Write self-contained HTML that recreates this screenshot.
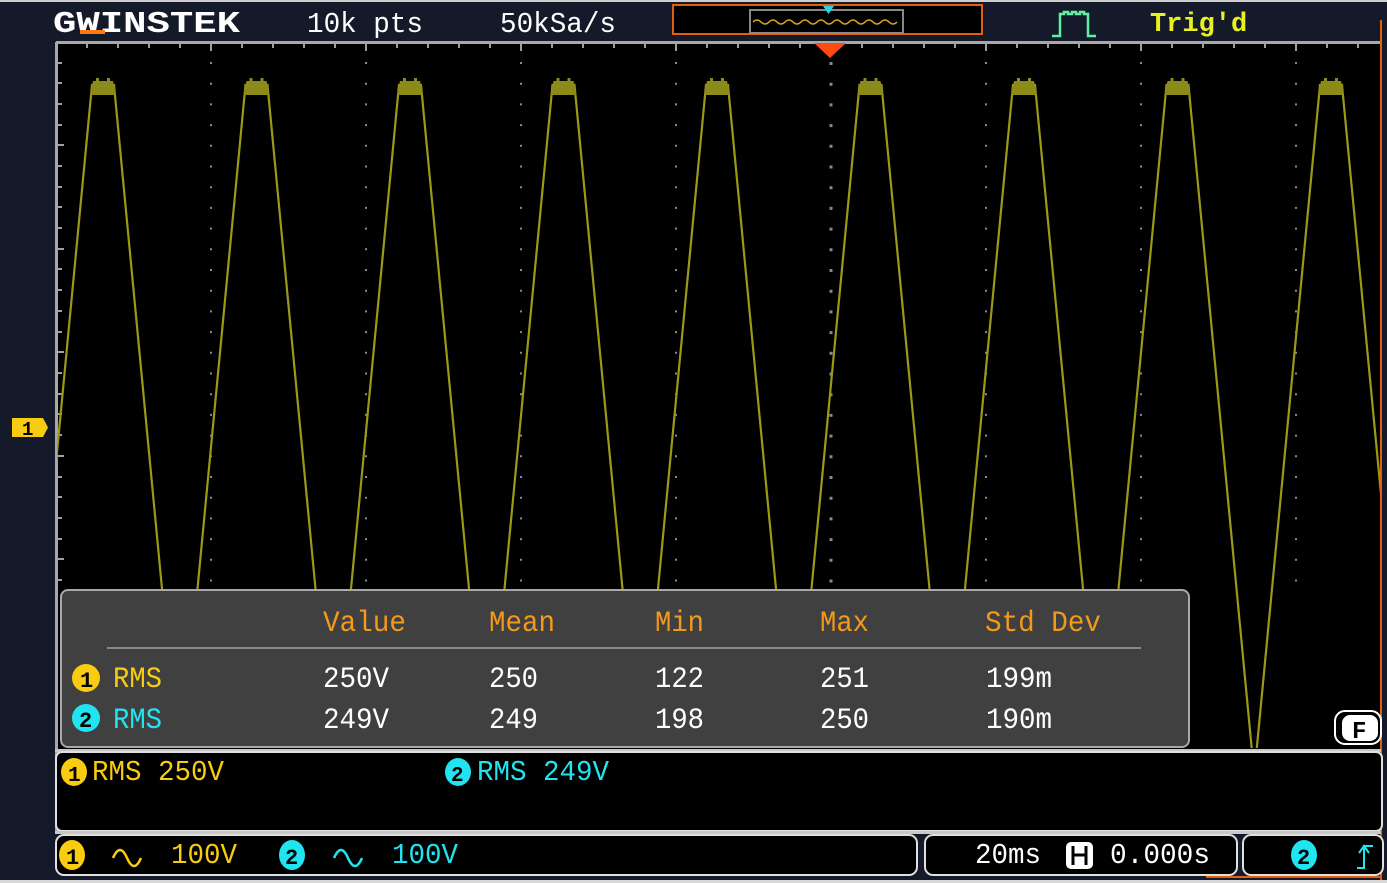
<!DOCTYPE html>
<html><head><meta charset="utf-8"><style>
html,body{margin:0;padding:0;background:#141a2a;}
svg{display:block}
text{font-family:"Liberation Mono",monospace;}
</style></head><body>
<svg width="1387" height="883" viewBox="0 0 1387 883" xmlns="http://www.w3.org/2000/svg">
<defs>
<pattern id="hdots" x="56" y="0" width="31" height="883" patternUnits="userSpaceOnUse"><rect x="0" y="0" width="2" height="2" fill="#9a9a9a"/></pattern>
<clipPath id="grid"><rect x="57" y="43" width="1323" height="705"/></clipPath>
</defs>
<rect width="1387" height="883" fill="#141a2a"/>
<rect x="0" y="0" width="1387" height="2" fill="#cfcfcf"/>
<rect x="0" y="880" width="1387" height="3" fill="#d8d8d8"/>
<rect x="56" y="42" width="1325" height="790" fill="#000"/>
<rect x="56" y="41" width="1325" height="3" fill="#a8a8a8"/>
<rect x="55" y="42" width="3" height="790" fill="#a8a8a8"/>
<path d="M87 44v4M118 44v4M149 44v4M180 44v4M211 44v7M242 44v4M273 44v4M304 44v4M335 44v4M366 44v7M397 44v4M428 44v4M459 44v4M490 44v4M521 44v7M552 44v4M583 44v4M614 44v4M645 44v4M676 44v7M707 44v4M738 44v4M769 44v4M800 44v4M831 44v7M862 44v4M893 44v4M924 44v4M955 44v4M986 44v7M1017 44v4M1048 44v4M1079 44v4M1110 44v4M1141 44v7M1172 44v4M1203 44v4M1234 44v4M1265 44v4M1296 44v7M1327 44v4M1358 44v4" stroke="#a0a0a0" stroke-width="2"/>
<path d="M58 63h4M58 83h4M58 104h4M58 125h4M58 145h6M58 166h4M58 187h4M58 207h4M58 228h4M58 249h6M58 269h4M58 290h4M58 311h4M58 332h4M58 352h6M58 373h4M58 394h4M58 414h4M58 435h4M58 456h6M58 477h4M58 497h4M58 518h4M58 539h4M58 559h6M58 580h4" stroke="#a0a0a0" stroke-width="2"/>
<rect x="56" y="144" width="1325" height="2" fill="url(#hdots)"/>
<rect x="56" y="248" width="1325" height="2" fill="url(#hdots)"/>
<rect x="56" y="351" width="1325" height="2" fill="url(#hdots)"/>
<rect x="56" y="455" width="1325" height="3" fill="url(#hdots)"/>
<rect x="56" y="558" width="1325" height="2" fill="url(#hdots)"/>
<g stroke="#8a8a8a" stroke-width="2" stroke-dasharray="2 18.7">
<path d="M211 62V590M366 62V590M521 62V590M676 62V590M986 62V590M1141 62V590M1296 62V590"/>
<path d="M831 62V590" stroke-dasharray="3 17.7" stroke-width="3"/>
</g>
<g clip-path="url(#grid)">
<polyline fill="none" stroke="#9c9818" stroke-width="2.2" points="-61.5,85 -39.5,85 26.25,775 92,85 114,85 179.75,775 245.5,85 267.5,85 333.25,775 399,85 421,85 486.75,775 552.5,85 574.5,85 640.25,775 706,85 728,85 793.75,775 859.5,85 881.5,85 947.25,775 1013,85 1035,85 1100.75,775 1166.5,85 1188.5,85 1254.25,775 1320,85 1342,85 1407.75,775"/>
<g fill="#8c8a18">
<path id="pk" d="M90 95l3 -14h3v-3h3v3h8v-3h3v3h3l3 14z"/>
<use href="#pk" x="153.5"/><use href="#pk" x="307"/><use href="#pk" x="460.5"/><use href="#pk" x="614"/><use href="#pk" x="767.5"/><use href="#pk" x="921"/><use href="#pk" x="1074.5"/><use href="#pk" x="1228"/>
</g>
</g>
<rect x="0" y="2" width="1387" height="38" fill="#141a2a"/>
<text x="53" y="32" font-family="Liberation Sans" font-weight="bold" font-size="31" fill="#fff" textLength="187" lengthAdjust="spacingAndGlyphs">GWINSTEK</text>
<rect x="80" y="30" width="25" height="4" fill="#ff7a10"/>
<text x="307" y="32" font-size="29" fill="#fff" textLength="116" lengthAdjust="spacingAndGlyphs">10k pts</text>
<text x="500" y="32" font-size="29" fill="#fff" textLength="116" lengthAdjust="spacingAndGlyphs">50kSa/s</text>
<rect x="673" y="5" width="309" height="29" fill="#000" stroke="#e06010" stroke-width="2"/>
<rect x="750" y="10" width="153" height="23" fill="none" stroke="#888" stroke-width="2"/>
<path d="M753 22q4 -4 8 0t8 0t8 0t8 0t8 0t8 0t8 0t8 0t8 0t8 0t8 0t8 0t8 0t8 0t8 0t8 0t8 0t8 0" fill="none" stroke="#d8a818" stroke-width="1.5"/>
<path d="M823 6h11l-5.5 8z" fill="#20d8e8"/>
<path d="M1052 36h8v-22h4v-2h4v2h4v-2h4v2h4v-2h4v2h4v22h8" fill="none" stroke="#60f0a0" stroke-width="2.5"/>
<text x="1150" y="31" font-family="Liberation Sans" font-weight="bold" font-size="27" fill="#e8f020">Trig'd</text>
<rect x="1380" y="20" width="2" height="860" fill="#e06010"/>
<path d="M814 43h32l-16 15z" fill="#ff4a14"/>
<path d="M12 418h31l5 9.5l-5 9.5h-31z" fill="#f8cc10"/>
<text x="22" y="435" font-family="Liberation Sans" font-weight="bold" font-size="19" fill="#000">1</text>
<rect x="61" y="590" width="1128" height="157" rx="7" fill="#404040" stroke="#a8a8a8" stroke-width="2"/>
<rect x="107" y="647" width="1034" height="2" fill="#8a8a8a"/>
<g font-size="30" fill="#f39a1a">
<text x="323" y="631" textLength="83" lengthAdjust="spacingAndGlyphs">Value</text>
<text x="489" y="631" textLength="66" lengthAdjust="spacingAndGlyphs">Mean</text>
<text x="655" y="631" textLength="49" lengthAdjust="spacingAndGlyphs">Min</text>
<text x="820" y="631" textLength="49" lengthAdjust="spacingAndGlyphs">Max</text>
<text x="985" y="631" textLength="116" lengthAdjust="spacingAndGlyphs">Std Dev</text>
</g>
<ellipse cx="86" cy="678" rx="14" ry="14" fill="#f8cc10"/>
<text x="80" y="687" font-family="Liberation Sans" font-weight="bold" font-size="22" fill="#000">1</text>
<ellipse cx="86" cy="718" rx="14" ry="14" fill="#20e4f0"/>
<text x="79" y="727" font-family="Liberation Sans" font-weight="bold" font-size="22" fill="#000">2</text>
<g font-size="30">
<text x="113" y="687" fill="#f8cc10" textLength="49" lengthAdjust="spacingAndGlyphs">RMS</text>
<text x="113" y="728" fill="#20e4f0" textLength="49" lengthAdjust="spacingAndGlyphs">RMS</text>
<g fill="#fff">
<text x="323" y="687" textLength="66" lengthAdjust="spacingAndGlyphs">250V</text>
<text x="489" y="687" textLength="49" lengthAdjust="spacingAndGlyphs">250</text>
<text x="655" y="687" textLength="49" lengthAdjust="spacingAndGlyphs">122</text>
<text x="820" y="687" textLength="49" lengthAdjust="spacingAndGlyphs">251</text>
<text x="986" y="687" textLength="66" lengthAdjust="spacingAndGlyphs">199m</text>
<text x="323" y="728" textLength="66" lengthAdjust="spacingAndGlyphs">249V</text>
<text x="489" y="728" textLength="49" lengthAdjust="spacingAndGlyphs">249</text>
<text x="655" y="728" textLength="49" lengthAdjust="spacingAndGlyphs">198</text>
<text x="820" y="728" textLength="49" lengthAdjust="spacingAndGlyphs">250</text>
<text x="986" y="728" textLength="66" lengthAdjust="spacingAndGlyphs">190m</text>
</g></g>
<rect x="1335" y="711" width="46" height="33" rx="10" fill="#000" stroke="#fff" stroke-width="2"/>
<rect x="1342" y="715" width="36" height="26" rx="8" fill="#fff"/>
<text x="1352" y="738" font-family="Liberation Sans" font-weight="bold" font-size="24" fill="#000">F</text>
<rect x="55" y="749" width="1326" height="3" fill="#c8c8c8"/>
<rect x="56" y="752" width="1326" height="79" rx="6" fill="#000" stroke="#e0e0e0" stroke-width="2"/>
<ellipse cx="74" cy="772" rx="13" ry="14" fill="#f8cc10"/>
<text x="68" y="781" font-family="Liberation Sans" font-weight="bold" font-size="21" fill="#000">1</text>
<text x="92" y="780" font-size="29" fill="#f8cc10" textLength="132" lengthAdjust="spacingAndGlyphs">RMS 250V</text>
<ellipse cx="458" cy="772" rx="13" ry="14" fill="#20e4f0"/>
<text x="451" y="781" font-family="Liberation Sans" font-weight="bold" font-size="21" fill="#000">2</text>
<text x="477" y="780" font-size="29" fill="#20e4f0" textLength="132" lengthAdjust="spacingAndGlyphs">RMS 249V</text>
<rect x="55" y="831" width="1326" height="3" fill="#c8c8c8"/>
<rect x="56" y="835" width="861" height="40" rx="8" fill="#000" stroke="#e0e0e0" stroke-width="2"/>
<rect x="925" y="835" width="312" height="40" rx="8" fill="#000" stroke="#e0e0e0" stroke-width="2"/>
<rect x="1243" y="835" width="140" height="40" rx="8" fill="#000" stroke="#e0e0e0" stroke-width="2"/>
<rect x="1206" y="876" width="176" height="2" fill="#e06010"/>
<ellipse cx="72" cy="855" rx="13" ry="15" fill="#f8cc10"/>
<text x="66" y="864" font-family="Liberation Sans" font-weight="bold" font-size="22" fill="#000">1</text>
<path d="M113 858q7 -16 14 0t14 0" fill="none" stroke="#f8cc10" stroke-width="2.5"/>
<text x="171" y="863" font-size="29" fill="#f8cc10" textLength="66" lengthAdjust="spacingAndGlyphs">100V</text>
<ellipse cx="292" cy="855" rx="13" ry="15" fill="#20e4f0"/>
<text x="285" y="864" font-family="Liberation Sans" font-weight="bold" font-size="22" fill="#000">2</text>
<path d="M334 858q7 -16 14 0t14 0" fill="none" stroke="#20e4f0" stroke-width="2.5"/>
<text x="392" y="863" font-size="29" fill="#20e4f0" textLength="66" lengthAdjust="spacingAndGlyphs">100V</text>
<text x="975" y="863" font-size="29" fill="#fff" textLength="66" lengthAdjust="spacingAndGlyphs">20ms</text>
<rect x="1066" y="842" width="27" height="27" rx="5" fill="#fff"/>
<path d="M1073 846v19M1086 846v19M1073 855h13" stroke="#000" stroke-width="3"/>
<text x="1110" y="863" font-size="29" fill="#fff" textLength="100" lengthAdjust="spacingAndGlyphs">0.000s</text>
<ellipse cx="1304" cy="855" rx="13" ry="15" fill="#20e4f0"/>
<text x="1297" y="864" font-family="Liberation Sans" font-weight="bold" font-size="22" fill="#000">2</text>
<path d="M1357 868h7v-22h9M1359 853l5 -7l5 7" fill="none" stroke="#20e4f0" stroke-width="2"/>
</svg>
</body></html>
